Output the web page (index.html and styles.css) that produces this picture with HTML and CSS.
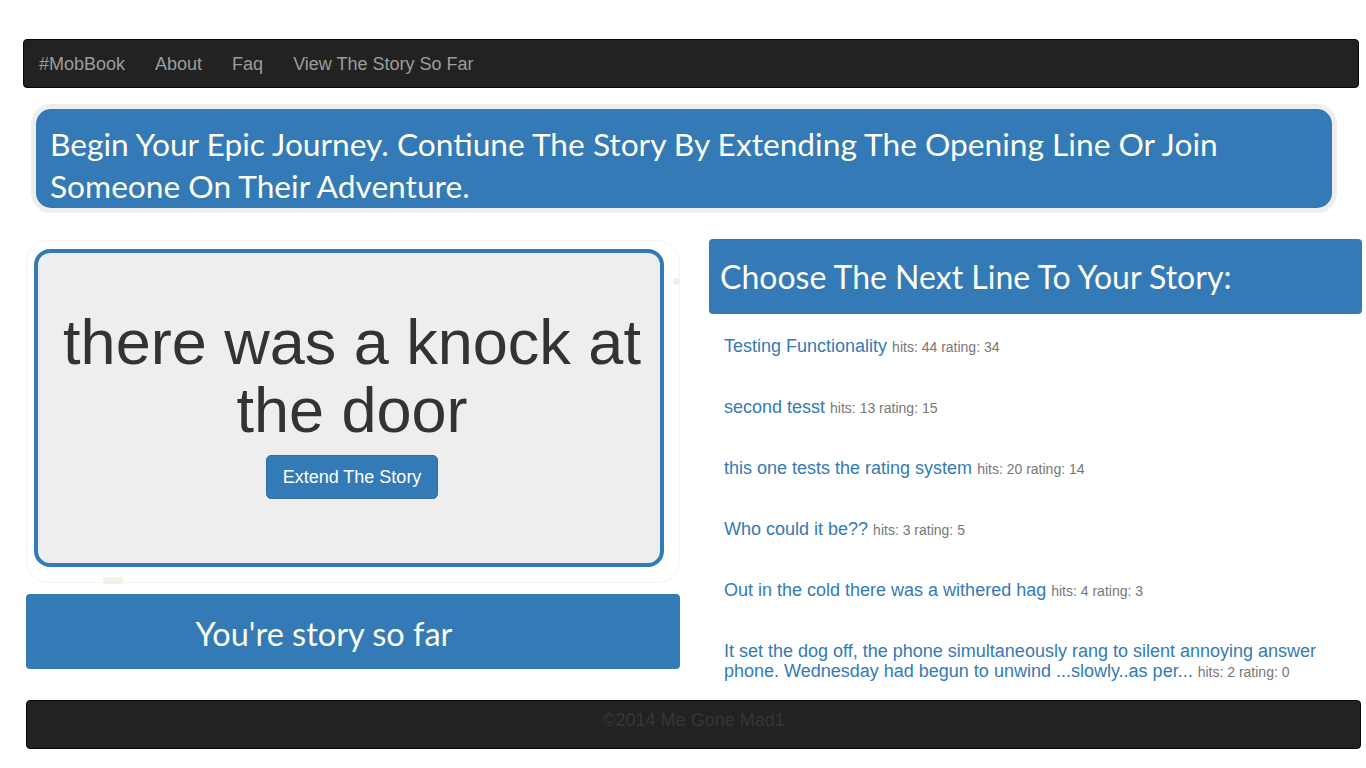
FILE: index.html
```html
<!DOCTYPE html>
<html lang="en">
<head>
<meta charset="utf-8">
<title>#MobBook</title>
<link rel="stylesheet" href="styles.css">
</head>
<body>
<nav class="navbar">
  <a class="brand" href="#">#MobBook</a>
  <a href="#">About</a>
  <a href="#">Faq</a>
  <a href="#">View The Story So Far</a>
</nav>

<div class="hero">
  <div class="hero-inner">Begin Your Epic Journey. Contiune The Story By Extending The Opening Line Or Join Someone On Their Adventure.</div>
</div>

<div class="main">
  <div class="left">
    <div class="stage">
      <div class="card">
        <h1 class="line">there was a knock at the door</h1>
        <a class="btn" href="#">Extend The Story</a>
      </div>
      <span class="deco-dot"></span>
      <span class="deco-bar"></span>
    </div>
    <div class="story-far">You're story so far</div>
  </div>
  <div class="right">
    <div class="choose">Choose The Next Line To Your Story:</div>
    <ul class="lines">
      <li><a href="#">Testing Functionality</a> <small>hits: 44 rating: 34</small></li>
      <li><a href="#">second tesst</a> <small>hits: 13 rating: 15</small></li>
      <li><a href="#">this one tests the rating system</a> <small>hits: 20 rating: 14</small></li>
      <li><a href="#">Who could it be??</a> <small>hits: 3 rating: 5</small></li>
      <li><a href="#">Out in the cold there was a withered hag</a> <small>hits: 4 rating: 3</small></li>
      <li><a href="#">It set the dog off, the phone simultaneously rang to silent annoying answer phone. Wednesday had begun to unwind ...slowly..as per...</a> <small>hits: 2 rating: 0</small></li>
    </ul>
  </div>
</div>

<footer class="footer">©2014 Me Gone Mad1</footer>
</body>
</html>
```

FILE: styles.css
```css
* { box-sizing: border-box; }

body {
  margin: 0;
  font-family: "Liberation Sans", Arial, sans-serif;
  color: #333;
  background: #fff;
}

a { text-decoration: none; }

.navbar {
  margin: 39px 7px 0 23px;
  height: 49px;
  background: #222;
  border: 1px solid #080808;
  border-radius: 4px;
  display: flex;
  align-items: center;
}

.navbar a {
  color: #9d9d9d;
  font-size: 18px;
  padding: 0 15px;
  line-height: 18px;
}

.hero {
  margin: 16px 29px 0 31px;
  border: 5px solid #eee;
  border-radius: 20px;
}

.hero-inner {
  background: #337ab7;
  border-radius: 15px;
  color: #fdfdf2;
  font-family: Lato, "Open Sans", sans-serif;
  font-size: 31.7px;
  line-height: 42px;
  padding: 14px 14px 0;
  height: 99px;
}

.main {
  display: flex;
  gap: 29px;
  margin: 26px 4px 0 26px;
}

.left {
  width: 654px;
  padding-top: 1px;
}

.right {
  width: 653px;
}

.stage {
  position: relative;
  height: 343px;
  border: 1px solid #f4f4f4;
  border-radius: 22px;
  padding: 8px 15px 0 7px;
}

.card {
  height: 318px;
  border: 4px solid #337ab7;
  border-radius: 16px;
  background: #eee;
  text-align: center;
  padding: 55px 0 0 6px;
}

.line {
  margin: 0;
  font-weight: normal;
  font-size: 63px;
  line-height: 68px;
  color: #333;
}

.btn {
  display: inline-block;
  margin-top: 11px;
  padding: 10px 16px;
  font-size: 18px;
  line-height: 22px;
  color: #fff;
  background: #337ab7;
  border: 1px solid #2e6da4;
  border-radius: 5px;
}

.deco-dot {
  position: absolute;
  left: 646px;
  top: 37px;
  width: 7px;
  height: 7px;
  border-radius: 50%;
  background: #efefe3;
}

.deco-bar {
  position: absolute;
  left: 76px;
  top: 336px;
  width: 20px;
  height: 7px;
  border-radius: 3px 3px 0 0;
  background: #f1f1e6;
}

.story-far {
  margin-top: 11px;
  height: 75px;
  background: #337ab7;
  border-radius: 4px;
  color: #fdfdf2;
  font-family: Lato, "Open Sans", sans-serif;
  font-size: 32.5px;
  line-height: 80px;
  text-align: center;
  padding-right: 58px;
}

.choose {
  height: 75px;
  background: #337ab7;
  border-radius: 4px;
  color: #fdfdf2;
  font-family: Lato, "Open Sans", sans-serif;
  font-size: 32px;
  line-height: 75px;
  padding-left: 11px;
}

.lines {
  list-style: none;
  margin: 0;
  padding: 22px 15px 0;
}

.lines li {
  font-size: 18px;
  line-height: 20px;
  margin-bottom: 41px;
}

.lines li:last-child { margin-bottom: 0; }

.lines a {
  color: #337ab7;
}

.lines small {
  color: #777;
  font-size: 14px;
  line-height: 1;
}

.footer {
  margin: 19px 5px 0 26px;
  height: 49px;
  background: #222;
  border: 1px solid #080808;
  border-radius: 4px;
  color: #363636;
  font-size: 18px;
  line-height: 39px;
  text-align: center;
}
```
